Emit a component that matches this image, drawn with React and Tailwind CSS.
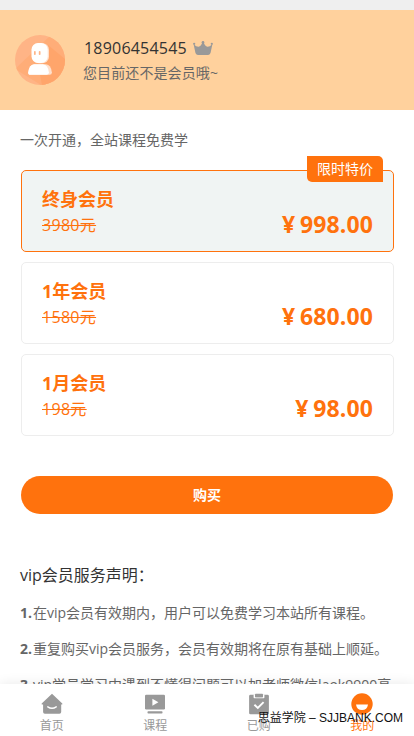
const PLANS = [
    { id: 'life', name: '终身会员', origin: '3980元', price: '998.00', tag: '限时特价' },
    { id: 'year', name: '1年会员', origin: '1580元', price: '680.00' },
    { id: 'month', name: '1月会员', origin: '198元', price: '98.00' },
];

const NOTES = [
    '在vip会员有效期内，用户可以免费学习本站所有课程。',
    '重复购买vip会员服务，会员有效期将在原有基础上顺延。',
    'vip学员学习中遇到不懂得问题可以加老师微信laok9900高',
];

const HomeIcon = () => (
    <svg viewBox="0 0 22 22" className="w-[22px] h-[22px]">
        <path d="M11 .8 21.3 10.6Q21.8 11.5 20.9 11.5H20.2V19Q20.2 20.8 18.4 20.8H3.9Q2.1 20.8 2.1 19V11.5H1.1Q.2 11.5.7 10.6Z" fill="currentColor" />
        <path d="M6.8 13.8Q11 16.6 15.2 13.8" fill="none" stroke="#fff" strokeWidth="1.5" strokeLinecap="round" />
    </svg>
);

const CourseIcon = () => (
    <svg viewBox="0 0 22 22" className="w-[22px] h-[22px]">
        <rect x="1" y="1.8" width="20" height="14.7" rx="1.2" fill="currentColor" />
        <rect x="3.5" y="18.3" width="15" height="2.2" rx=".8" fill="currentColor" />
        <path d="M8.4 5.8V12.8L14.4 9.3Z" fill="#fff" />
    </svg>
);

const BoughtIcon = () => (
    <svg viewBox="0 0 22 22" className="w-[22px] h-[22px]">
        <rect x="1.1" y="1.8" width="19.8" height="19.5" rx="1.4" fill="currentColor" />
        <path d="M5.6 1.5H7.2V4.2H14.8V1.5H16.4V4.6Q16.4 5.2 15.6 5.2H6.4Q5.6 5.2 5.6 4.6Z" fill="#fff" />
        <rect x="7" y=".8" width="8" height="3.4" rx=".8" fill="currentColor" />
        <path d="M6.4 11.8 9.8 15 15.6 9.2" fill="none" stroke="#fff" strokeWidth="1.9" />
    </svg>
);

const MineIcon = () => (
    <svg viewBox="0 0 22 22" className="w-[22px] h-[22px]">
        <circle cx="11" cy="11" r="10.7" fill="currentColor" />
        <path d="M5 11.5H17Q16.2 17.1 11 17.1T5 11.5Z" fill="#fff" />
    </svg>
);

const TABS = [
    { label: '首页', Icon: HomeIcon },
    { label: '课程', Icon: CourseIcon },
    { label: '已购', Icon: BoughtIcon },
    { label: '我的', Icon: MineIcon, active: true },
];

const Avatar = () => (
    <svg viewBox="0 0 50 50" className="w-[50px] h-[50px] shrink-0">
        <defs>
            <clipPath id="face"><circle cx="25" cy="25" r="25" /></clipPath>
        </defs>
        <g clipPath="url(#face)">
            <rect width="50" height="50" fill="#ffb486" />
            <path d="M0 34 36 0H50V50H26Z" fill="#ffad78" />
            <path d="M33 10 50 24V50H27L24 34Z" fill="#ffa56b" />
        </g>
        <path d="M15.5 39.7Q13 39.7 13.2 37.4 14.2 29.8 19 29.3H31Q36 29.8 36.9 37.4 37 39.7 34.5 39.7Z" fill="#ffe0cc" />
        <path d="M15.5 39.7Q13 39.7 13.2 37.4 14.2 29.8 19 29.3H28Q33 29.8 33.9 37.4 34 39.7 31.5 39.7Z" fill="#fff" />
        <rect x="17.5" y="8.2" width="16.5" height="20" rx="6.5" fill="#ffe0cc" />
        <rect x="16.5" y="8" width="16.2" height="20" rx="6.5" fill="#fff" />
        <rect x="19" y="16" width="1.7" height="4" rx=".8" fill="#ffb486" />
        <rect x="23.8" y="16" width="1.7" height="4" rx=".8" fill="#ffb486" />
    </svg>
);

const Crown = () => (
    <svg viewBox="0 0 20 14" className="w-5 h-3.5" fill="#999">
        <path d="M.6 3.2Q3.6 6 5.6 5.8 8 5.4 9.2 1.8H10.8Q12 5.4 14.4 5.8 16.4 6 19.4 3.2L17.6 11.8Q17.2 13.9 15.2 13.9H4.8Q2.8 13.9 2.4 11.8Z" />
        <circle cx="1.2" cy="2.8" r="1.1" />
        <circle cx="10" cy="1.3" r="1.3" />
        <circle cx="18.8" cy="2.8" r="1.1" />
    </svg>
);

function PlanCard({ plan, active }) {
    return (
        <div className={`relative h-[82px] rounded-[5px] border px-5 pt-[18px] text-[#ff720d] ${active ? 'border-[#ff720d] bg-[#f0f4f3]' : 'border-[#ededed] bg-white'}`}>
            {plan.tag && (
                <span className="absolute right-2.5 -top-[15px] h-[26px] w-[76px] rounded-tr-[5px] rounded-bl-[5px] bg-[#ff720d] text-center text-sm leading-[26px] text-white">{plan.tag}</span>
            )}
            <p className="text-lg leading-5 font-bold">{plan.name}</p>
            <div className="flex items-start justify-between">
                <del className="mt-[6px] text-base leading-5 tracking-[0.3px] decoration-1">{plan.origin}</del>
                <p className="mt-[3px] flex text-[23px] leading-6 font-bold">
                    <span className="mr-[5px]">¥</span>
                    <span className="tracking-[0.1px]">{plan.price}</span>
                </p>
            </div>
        </div>
    );
}

export default function App() {
    return (
        <div className="flex h-[736px] w-full flex-col overflow-hidden bg-white font-['Open_Sans','Noto_Sans_CJK_SC',sans-serif] text-[#666]">
            <div className="h-2.5 shrink-0 bg-[#efefef]"></div>

            {/* Member header */}
            <header className="flex h-[100px] shrink-0 items-center bg-[#ffd19d] pl-[15px]">
                <Avatar />
                <div className="ml-[19px]">
                    <div className="mt-px flex h-6 items-center">
                        <span className="text-base text-[#333] tracking-[0.2px]">18906454545</span>
                        <span className="ml-1.5"><Crown /></span>
                    </div>
                    <p className="-ml-px mt-px text-sm leading-6 tracking-[0.1px]">您目前还不是会员哦~</p>
                </div>
            </header>

            <main className="flex min-h-0 flex-1 flex-col overflow-hidden pr-5 pl-[21px]">
                <p className="-ml-px mt-5 shrink-0 text-sm leading-5">一次开通，全站课程免费学</p>
                <div className="mt-5 flex shrink-0 flex-col gap-2.5">
                    {PLANS.map((plan, i) => <PlanCard key={plan.id} plan={plan} active={i === 0} />)}
                </div>
                <button className="mt-10 mr-px h-[38px] shrink-0 rounded-full bg-[#ff720d] text-sm font-bold text-white">购买</button>

                {/* Terms */}
                <h2 className="-ml-px mt-[49px] shrink-0 text-base leading-6 text-[#333]">vip会员服务声明：</h2>
                <ol className="-ml-px mt-2 shrink-0">
                    {NOTES.map((note, i) => (
                        <li key={note} className="h-9 text-sm leading-9 whitespace-nowrap"><b className="mr-px">{i + 1}.</b>{note}</li>
                    ))}
                </ol>
            </main>

            <nav className="relative grid h-[52px] shrink-0 grid-cols-4 bg-white shadow-[0_0_12px_rgba(0,0,0,0.09)]">
                {TABS.map(({ label, Icon, active }) => (
                    <div key={label} className={`flex flex-col items-center pt-[9px] ${active ? 'text-[#ff720d]' : 'text-[#999]'}`}>
                        <Icon />
                        <span className="mt-[3px] text-xs leading-4">{label}</span>
                    </div>
                ))}
                <span className="absolute top-[26px] right-[11px] font-['Liberation_Sans','Noto_Sans_CJK_SC',sans-serif] text-xs leading-4 whitespace-nowrap text-[#111]">思益学院 – SJJBANK.COM</span>
            </nav>
        </div>
    );
}
